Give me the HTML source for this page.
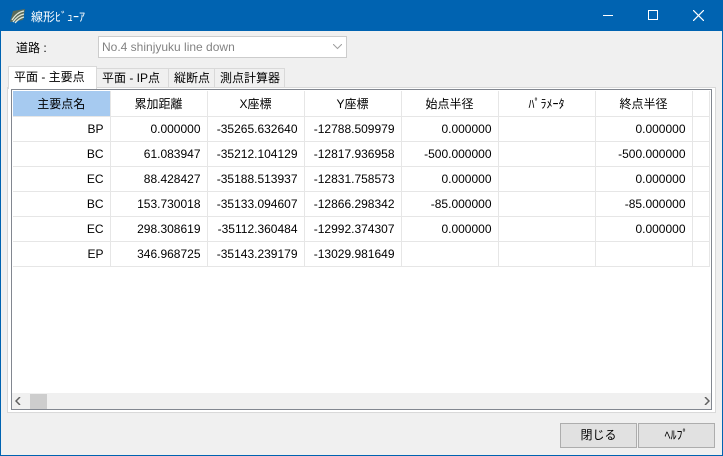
<!DOCTYPE html><html><head><meta charset="utf-8"><style>
*{box-sizing:border-box;margin:0;padding:0}
body{width:723px;height:456px;overflow:hidden;background:#f0f0f0;font-family:"Liberation Sans","Noto Sans CJK JP",sans-serif;font-size:12px;color:#000;position:relative}
.win{position:absolute;left:0;top:0;width:723px;height:456px;border:1px solid #0063b1;border-top:none}
.title{position:absolute;left:0;top:0;width:723px;height:31px;background:#0063b1;color:#fff}
.abs{position:absolute}
table{border-collapse:collapse;table-layout:fixed;position:absolute;left:13px;top:91px}
td{height:25px;border-right:1px solid #e6e6e6;border-bottom:1px solid #e6e6e6;text-align:right;padding-right:6px;font-size:12px;white-space:nowrap;background:#fff}
tr.h td{text-align:center;padding:0}
.btn{position:absolute;top:423px;height:25px;border:1px solid #adadad;background:#e1e1e1;text-align:center;line-height:23px}
.tab{position:absolute;top:68px;height:19px;border:1px solid #d9d9d9;border-bottom:none;background:#f0f0f0;line-height:18px;padding-left:5px;font-size:12px}
</style></head><body>
<div class="title">
<svg class="abs" style="left:9px;top:8px" width="18" height="16" viewBox="0 0 18 16"><path d="M1 14 L4 3 L16 1 L14 12 Z" fill="#5a6b5a"/><path d="M3 12 Q8 4 15 3 M4 14 Q9 7 15 6 M6 15 Q10 10 15 9" stroke="#dfe6d8" stroke-width="1.3" fill="none"/></svg>
<div class="abs" style="left:31px;top:8px;font-size:12px">線形ﾋﾞｭｰｱ</div>
<div class="abs" style="left:603px;top:15px;width:10px;height:1px;background:#fff"></div>
<div class="abs" style="left:648px;top:10px;width:10px;height:10px;border:1px solid #fff"></div>
<svg class="abs" style="left:693px;top:10px" width="11" height="11"><path d="M0 0L11 11M11 0L0 11" stroke="#fff" stroke-width="1.2"/></svg>
</div>
<div class="win"></div>
<div class="abs" style="left:16px;top:39px">道路 :</div>
<div class="abs" style="left:98px;top:36px;width:249px;height:22px;border:1px solid #cccccc;background:#fff;color:#838383;padding:3px 0 0 3px">No.4 shinjyuku line down</div>
<svg class="abs" style="left:333px;top:44px" width="9" height="6"><path d="M0 0L4.5 4.5L9 0" stroke="#a0a0a0" fill="none"/></svg>
<div class="abs" style="left:7px;top:87px;width:709px;height:326px;border:1px solid #d9d9d9;background:#fff"></div>
<div class="tab" style="left:96px;width:73px">平面 - IP点</div>
<div class="tab" style="left:168px;width:47px">縦断点</div>
<div class="tab" style="left:214px;width:71px">測点計算器</div>
<div class="tab" style="left:8px;top:66px;height:23px;width:89px;background:#fff;border-color:#d9d9d9;z-index:2;padding-top:1px">平面 - 主要点</div>
<div class="abs" style="left:11px;top:89px;width:701px;height:321px;border:1px solid #828790;background:#fff"></div>
<table>
<colgroup><col style="width:97px"><col style="width:97px"><col style="width:97px"><col style="width:97px"><col style="width:97px"><col style="width:97px"><col style="width:97px"><col style="width:17px"></colgroup>
<tr class="h"><td style="background:#a6caf0">主要点名</td><td>累加距離</td><td>X座標</td><td>Y座標</td><td>始点半径</td><td>ﾊﾟﾗﾒｰﾀ</td><td>終点半径</td><td></td></tr>
<tr><td>BP</td><td>0.000000</td><td>-35265.632640</td><td>-12788.509979</td><td>0.000000</td><td></td><td>0.000000</td><td></td></tr>
<tr><td>BC</td><td>61.083947</td><td>-35212.104129</td><td>-12817.936958</td><td>-500.000000</td><td></td><td>-500.000000</td><td></td></tr>
<tr><td>EC</td><td>88.428427</td><td>-35188.513937</td><td>-12831.758573</td><td>0.000000</td><td></td><td>0.000000</td><td></td></tr>
<tr><td>BC</td><td>153.730018</td><td>-35133.094607</td><td>-12866.298342</td><td>-85.000000</td><td></td><td>-85.000000</td><td></td></tr>
<tr><td>EC</td><td>298.308619</td><td>-35112.360484</td><td>-12992.374307</td><td>0.000000</td><td></td><td>0.000000</td><td></td></tr>
<tr><td>EP</td><td>346.968725</td><td>-35143.239179</td><td>-13029.981649</td><td></td><td></td><td></td><td></td></tr>
</table>
<div class="abs" style="left:12px;top:393px;width:699px;height:16px;background:#f0f0f0"></div>
<div class="abs" style="left:30px;top:394px;width:17px;height:15px;background:#cdcdcd"></div>
<svg class="abs" style="left:15px;top:397px" width="6" height="8"><path d="M5 0L1 4L5 8" stroke="#606060" stroke-width="1.5" fill="none"/></svg>
<svg class="abs" style="left:704px;top:397px" width="6" height="8"><path d="M1 0L5 4L1 8" stroke="#606060" stroke-width="1.5" fill="none"/></svg>
<div class="btn" style="left:560px;width:77px">閉じる</div>
<div class="btn" style="left:638px;width:77px">ﾍﾙﾌﾟ</div>
</body></html>
